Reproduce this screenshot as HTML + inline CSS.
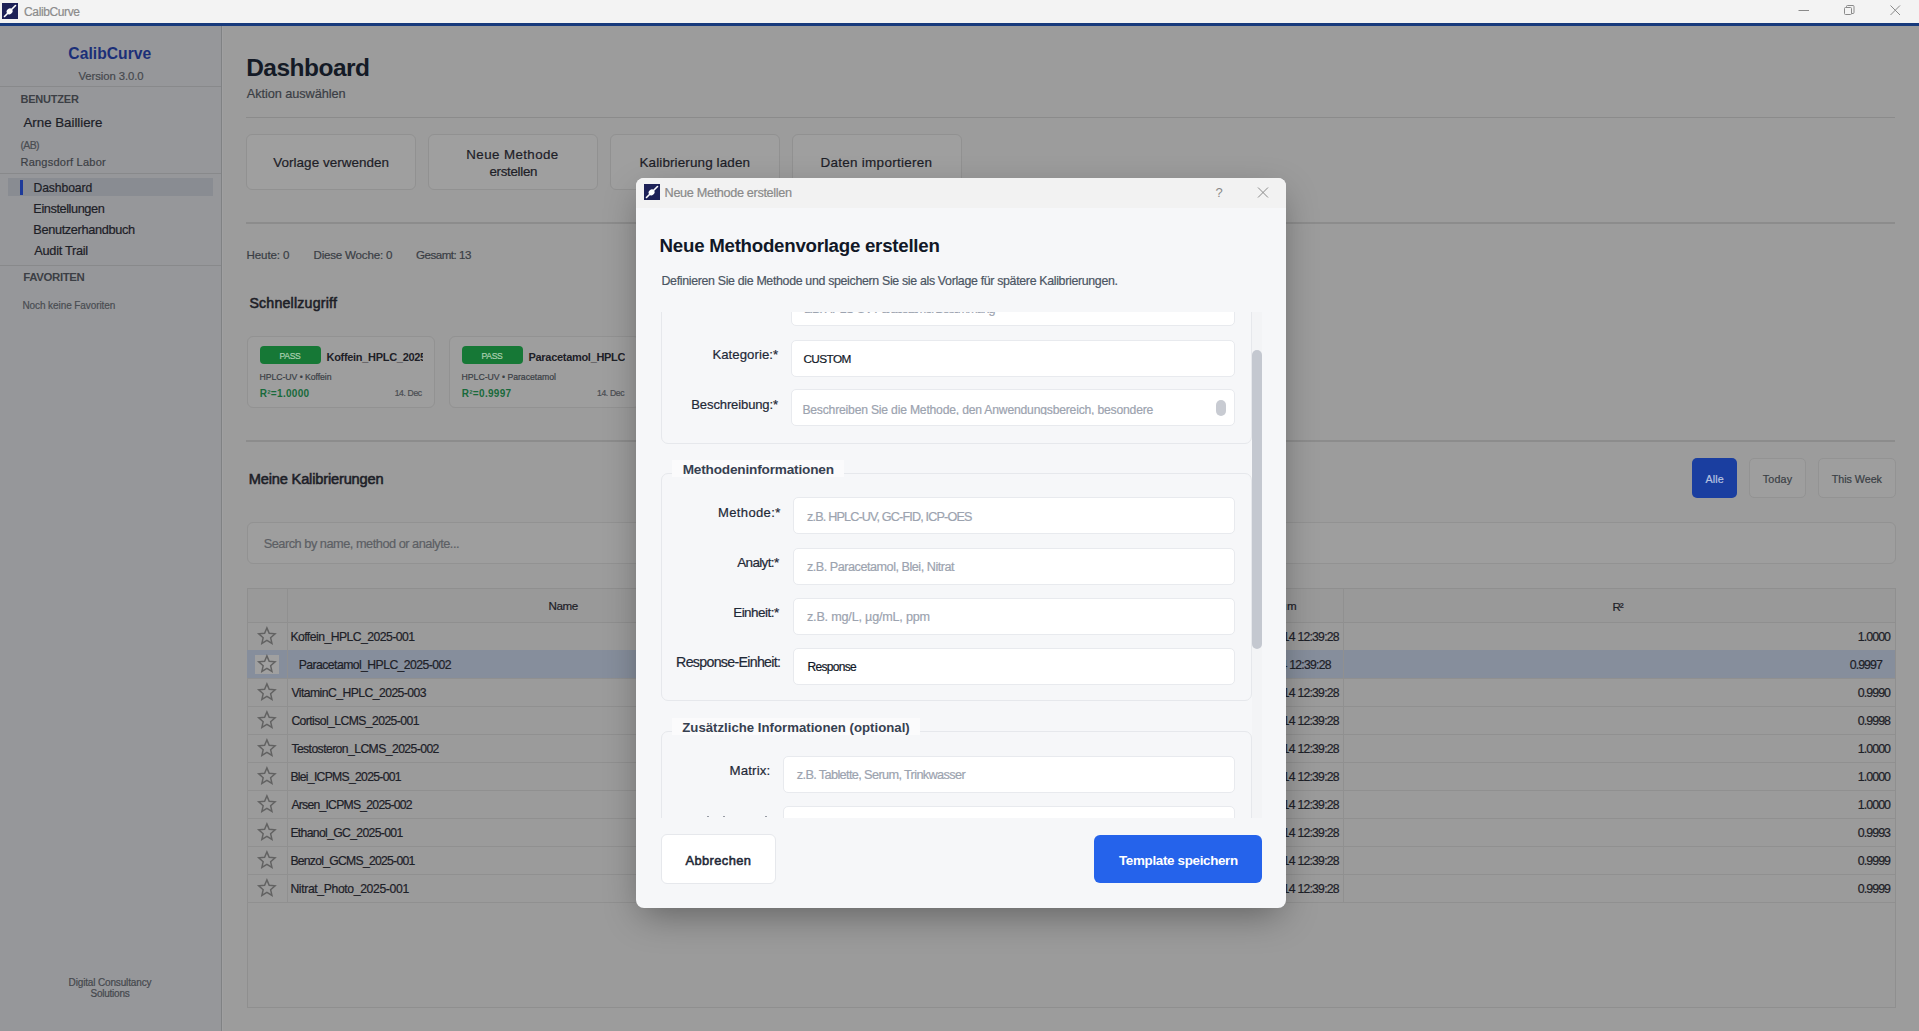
<!DOCTYPE html>
<html><head><meta charset="utf-8"><title>CalibCurve</title>
<style>
html,body{margin:0;padding:0;}
body{width:1919px;height:1031px;position:relative;overflow:hidden;background:#9c9c9c;font-family:"Liberation Sans",sans-serif;}
.b{position:absolute;}
.t{position:absolute;white-space:nowrap;line-height:1;font-family:"Liberation Sans",sans-serif;-webkit-text-stroke:0.2px currentColor;}
.t.bd{-webkit-text-stroke:0;}
.t.sb{-webkit-text-stroke:0.55px currentColor;}
</style></head><body>
<div class="b" style="left:0px;top:0px;width:1919px;height:23px;background:#f3f3f3;"></div>
<div class="b" style="left:0px;top:23px;width:1919px;height:3px;background:#173a7c;"></div>
<svg class="b" style="left:2px;top:3px" width="16" height="16" viewBox="0 0 16 16"><rect width="16" height="16" fill="#1d2157"/><line x1="2.5" y1="13.5" x2="13.5" y2="2.5" stroke="#fff" stroke-width="1.6" stroke-linecap="round"/><ellipse cx="7.6" cy="8.4" rx="3.1" ry="2.7" fill="#fff" transform="rotate(-40 7.6 8.4)"/></svg>
<svg class="b" style="left:1790px;top:0px" width="129" height="22"><line x1="8.5" y1="10.5" x2="19" y2="10.5" stroke="#8a8a8a" stroke-width="1"/>
<rect x="54.5" y="7.5" width="7" height="7" rx="1" fill="none" stroke="#8a8a8a" stroke-width="1"/><path d="M56.5 7.5 V6.5 a1 1 0 0 1 1 -1 H63 a1 1 0 0 1 1 1 V12.5 a1 1 0 0 1 -1 1 H61.5" fill="none" stroke="#8a8a8a" stroke-width="1"/>
<line x1="100.5" y1="5.5" x2="110" y2="15" stroke="#8a8a8a" stroke-width="1"/><line x1="110" y1="5.5" x2="100.5" y2="15" stroke="#8a8a8a" stroke-width="1"/></svg>
<div class="b" style="left:0px;top:26px;width:221px;height:1005px;background:#96979a;"></div>
<div class="b" style="left:221px;top:26px;width:1px;height:1005px;background:#808284;"></div>
<div class="b" style="left:222px;top:26px;width:1px;height:1005px;background:#a0a0a1;"></div>
<div class="b" style="left:0px;top:86.2px;width:221px;height:1.2px;background:#88898b;"></div>
<div class="b" style="left:0px;top:173px;width:221px;height:1.2px;background:#88898b;"></div>
<div class="b" style="left:0px;top:264.5px;width:221px;height:1.2px;background:#88898b;"></div>
<div class="b" style="left:8px;top:178px;width:205px;height:18px;background:#898c92;"></div>
<div class="b" style="left:20px;top:180px;width:3px;height:15px;background:#1d3a9a;"></div>
<div class="b" style="left:246px;top:117px;width:1649px;height:1.3px;background:#8b8b8b;"></div>
<div class="b" style="left:246px;top:134px;width:169.5px;height:55.5px;background:#9f9f9f;border:1px solid #919191;box-sizing:border-box;border-radius:6px;"></div>
<div class="b" style="left:428px;top:134px;width:169.5px;height:55.5px;background:#9f9f9f;border:1px solid #919191;box-sizing:border-box;border-radius:6px;"></div>
<div class="b" style="left:610px;top:134px;width:169.5px;height:55.5px;background:#9f9f9f;border:1px solid #919191;box-sizing:border-box;border-radius:6px;"></div>
<div class="b" style="left:792px;top:134px;width:169.5px;height:55.5px;background:#9f9f9f;border:1px solid #919191;box-sizing:border-box;border-radius:6px;"></div>
<div class="b" style="left:246px;top:222.2px;width:1649px;height:1.6px;background:#8c8c8c;"></div>
<div class="b" style="left:246.5px;top:336px;width:188.5px;height:71.5px;background:#9e9e9e;border:1px solid #929292;box-sizing:border-box;border-radius:6px;"></div>
<div class="b" style="left:449px;top:336px;width:191px;height:71.5px;background:#9e9e9e;border:1px solid #929292;box-sizing:border-box;border-radius:6px;"></div>
<div class="b" style="left:259.8px;top:345.6px;width:60.9px;height:18.4px;background:#167836;border-radius:4px;"></div>
<div class="b" style="left:461.9px;top:345.6px;width:60.9px;height:18.4px;background:#167836;border-radius:4px;"></div>
<div class="b" style="left:246px;top:440.2px;width:1649px;height:1.6px;background:#8c8c8c;"></div>
<div class="b" style="left:1692px;top:458px;width:45px;height:40px;background:#1a3ea0;border-radius:5px;"></div>
<div class="b" style="left:1749px;top:458px;width:57px;height:40px;background:#9e9e9e;border:1px solid #939393;box-sizing:border-box;border-radius:5px;"></div>
<div class="b" style="left:1818px;top:458px;width:78px;height:40px;background:#9e9e9e;border:1px solid #939393;box-sizing:border-box;border-radius:5px;"></div>
<div class="b" style="left:246.5px;top:522px;width:1649.0px;height:41.5px;background:#9e9e9e;border:1px solid #929292;box-sizing:border-box;border-radius:6px;"></div>
<div class="b" style="left:246.5px;top:588px;width:1649.0px;height:420px;background:#9b9b9b;border:1px solid #8f8f8f;box-sizing:border-box;"></div>
<div class="b" style="left:247.5px;top:589px;width:1647.0px;height:33px;background:#999999;"></div>
<div class="b" style="left:247px;top:622px;width:1648px;height:1px;background:#8f8f8f;"></div>
<div class="b" style="left:247px;top:650px;width:1648px;height:1px;background:#909090;"></div>
<div class="b" style="left:247px;top:678px;width:1648px;height:1px;background:#909090;"></div>
<div class="b" style="left:247px;top:706px;width:1648px;height:1px;background:#909090;"></div>
<div class="b" style="left:247px;top:734px;width:1648px;height:1px;background:#909090;"></div>
<div class="b" style="left:247px;top:762px;width:1648px;height:1px;background:#909090;"></div>
<div class="b" style="left:247px;top:790px;width:1648px;height:1px;background:#909090;"></div>
<div class="b" style="left:247px;top:818px;width:1648px;height:1px;background:#909090;"></div>
<div class="b" style="left:247px;top:846px;width:1648px;height:1px;background:#909090;"></div>
<div class="b" style="left:247px;top:874px;width:1648px;height:1px;background:#909090;"></div>
<div class="b" style="left:247px;top:902px;width:1648px;height:1px;background:#909090;"></div>
<div class="b" style="left:247px;top:650px;width:1648px;height:28px;background:#868e9c;"></div>
<div class="b" style="left:287px;top:589px;width:1px;height:313px;background:#909090;"></div>
<div class="b" style="left:1343px;top:589px;width:1px;height:313px;background:#909090;"></div>
<div class="b" style="left:1214px;top:589px;width:1px;height:313px;background:#909090;"></div>
<div class="b" style="left:255px;top:655px;width:24px;height:19px;background:#a0a0a0;"></div>
<svg class="b" style="left:0;top:0" width="1919" height="1031"><path d="M266.90,627.90 L269.19,633.34 L275.08,633.84 L270.61,637.71 L271.95,643.46 L266.90,640.40 L261.85,643.46 L263.19,637.71 L258.72,633.84 L264.61,633.34 Z" fill="none" stroke="#626262" stroke-width="1.45" stroke-linejoin="miter"/><path d="M266.90,655.90 L269.19,661.34 L275.08,661.84 L270.61,665.71 L271.95,671.46 L266.90,668.40 L261.85,671.46 L263.19,665.71 L258.72,661.84 L264.61,661.34 Z" fill="none" stroke="#626262" stroke-width="1.45" stroke-linejoin="miter"/><path d="M266.90,683.90 L269.19,689.34 L275.08,689.84 L270.61,693.71 L271.95,699.46 L266.90,696.40 L261.85,699.46 L263.19,693.71 L258.72,689.84 L264.61,689.34 Z" fill="none" stroke="#626262" stroke-width="1.45" stroke-linejoin="miter"/><path d="M266.90,711.90 L269.19,717.34 L275.08,717.84 L270.61,721.71 L271.95,727.46 L266.90,724.40 L261.85,727.46 L263.19,721.71 L258.72,717.84 L264.61,717.34 Z" fill="none" stroke="#626262" stroke-width="1.45" stroke-linejoin="miter"/><path d="M266.90,739.90 L269.19,745.34 L275.08,745.84 L270.61,749.71 L271.95,755.46 L266.90,752.40 L261.85,755.46 L263.19,749.71 L258.72,745.84 L264.61,745.34 Z" fill="none" stroke="#626262" stroke-width="1.45" stroke-linejoin="miter"/><path d="M266.90,767.90 L269.19,773.34 L275.08,773.84 L270.61,777.71 L271.95,783.46 L266.90,780.40 L261.85,783.46 L263.19,777.71 L258.72,773.84 L264.61,773.34 Z" fill="none" stroke="#626262" stroke-width="1.45" stroke-linejoin="miter"/><path d="M266.90,795.90 L269.19,801.34 L275.08,801.84 L270.61,805.71 L271.95,811.46 L266.90,808.40 L261.85,811.46 L263.19,805.71 L258.72,801.84 L264.61,801.34 Z" fill="none" stroke="#626262" stroke-width="1.45" stroke-linejoin="miter"/><path d="M266.90,823.90 L269.19,829.34 L275.08,829.84 L270.61,833.71 L271.95,839.46 L266.90,836.40 L261.85,839.46 L263.19,833.71 L258.72,829.84 L264.61,829.34 Z" fill="none" stroke="#626262" stroke-width="1.45" stroke-linejoin="miter"/><path d="M266.90,851.90 L269.19,857.34 L275.08,857.84 L270.61,861.71 L271.95,867.46 L266.90,864.40 L261.85,867.46 L263.19,861.71 L258.72,857.84 L264.61,857.34 Z" fill="none" stroke="#626262" stroke-width="1.45" stroke-linejoin="miter"/><path d="M266.90,879.90 L269.19,885.34 L275.08,885.84 L270.61,889.71 L271.95,895.46 L266.90,892.40 L261.85,895.46 L263.19,889.71 L258.72,885.84 L264.61,885.34 Z" fill="none" stroke="#626262" stroke-width="1.45" stroke-linejoin="miter"/></svg>
<div class="t" style="left:24.1px;top:5.7px;font-size:12px;font-weight:400;color:#8b8b8b;letter-spacing:-0.387px;">CalibCurve</div>
<div class="t bd" style="left:68.3px;top:46.4px;font-size:15.65px;font-weight:700;color:#1b2f78;letter-spacing:0.047px;">CalibCurve</div>
<div class="t" style="left:78.5px;top:71.09px;font-size:11.3px;font-weight:400;color:#45484d;letter-spacing:-0.08px;">Version 3.0.0</div>
<div class="t bd" style="left:20.5px;top:93.65px;font-size:11px;font-weight:700;color:#3c3f45;letter-spacing:-0.206px;">BENUTZER</div>
<div class="t" style="left:23.5px;top:115.67px;font-size:13.33px;font-weight:500;color:#1d2027;letter-spacing:-0.027px;">Arne Bailliere</div>
<div class="t" style="left:20.5px;top:140.07px;font-size:10.5px;font-weight:400;color:#4a4d52;letter-spacing:-0.668px;">(AB)</div>
<div class="t" style="left:20.5px;top:156.95px;font-size:11px;font-weight:400;color:#3c3f45;letter-spacing:0.23px;">Rangsdorf Labor</div>
<div class="t" style="left:33.5px;top:182.46px;font-size:12.17px;font-weight:400;color:#1d2027;letter-spacing:-0.101px;">Dashboard</div>
<div class="t" style="left:33.3px;top:203.46px;font-size:12.75px;font-weight:400;color:#1d2027;letter-spacing:-0.422px;">Einstellungen</div>
<div class="t" style="left:33.3px;top:224.26px;font-size:12.75px;font-weight:400;color:#1d2027;letter-spacing:-0.357px;">Benutzerhandbuch</div>
<div class="t" style="left:34.3px;top:245.06px;font-size:12.75px;font-weight:400;color:#1d2027;letter-spacing:-0.279px;">Audit Trail</div>
<div class="t bd" style="left:23.3px;top:272.37px;font-size:11.45px;font-weight:700;color:#3c3f45;letter-spacing:-0.393px;">FAVORITEN</div>
<div class="t" style="left:22.4px;top:300.6px;font-size:10.0px;font-weight:400;color:#4a4d52;letter-spacing:-0.081px;">Noch keine Favoriten</div>
<div class="t" style="left:68.6px;top:978.3px;font-size:10.0px;font-weight:400;color:#45484d;letter-spacing:-0.15px;">Digital Consultancy</div>
<div class="t" style="left:90.6px;top:989.0px;font-size:10.0px;font-weight:400;color:#45484d;letter-spacing:-0.255px;">Solutions</div>
<div class="t bd" style="left:246.2px;top:56.17px;font-size:24.5px;font-weight:700;color:#141a26;letter-spacing:-0.525px;">Dashboard</div>
<div class="t" style="left:246.7px;top:87.96px;font-size:12.75px;font-weight:400;color:#3a3e45;letter-spacing:-0.063px;">Aktion auswählen</div>
<div class="t" style="left:273.3px;top:155.54px;font-size:13.48px;font-weight:500;color:#1d2027;letter-spacing:0.024px;">Vorlage verwenden</div>
<div class="t" style="left:466.3px;top:147.67px;font-size:13.33px;font-weight:500;color:#1d2027;letter-spacing:0.407px;">Neue Methode</div>
<div class="t" style="left:489.5px;top:164.67px;font-size:13.33px;font-weight:500;color:#1d2027;letter-spacing:-0.308px;">erstellen</div>
<div class="t" style="left:639.5px;top:155.54px;font-size:13.48px;font-weight:500;color:#1d2027;letter-spacing:0.113px;">Kalibrierung laden</div>
<div class="t" style="left:820.5px;top:155.54px;font-size:13.48px;font-weight:500;color:#1d2027;letter-spacing:0.277px;">Daten importieren</div>
<div class="t" style="left:246.5px;top:250.15px;font-size:11.59px;font-weight:400;color:#3a3e45;letter-spacing:-0.118px;">Heute: 0</div>
<div class="t" style="left:313.5px;top:250.15px;font-size:11.59px;font-weight:400;color:#3a3e45;letter-spacing:-0.206px;">Diese Woche: 0</div>
<div class="t" style="left:416px;top:250.15px;font-size:11.59px;font-weight:400;color:#3a3e45;letter-spacing:-0.49px;">Gesamt: 13</div>
<div class="t sb" style="left:249.4px;top:295.73px;font-size:14.2px;font-weight:400;color:#1d2027;letter-spacing:0.195px;">Schnellzugriff</div>
<div class="t" style="left:279.6px;top:351.59px;font-size:8.6px;font-weight:400;color:#a9cfae;letter-spacing:-0.386px;">PASS</div>
<div class="b" style="left:0;top:0;width:423px;height:1031px;overflow:hidden"><div class="t bd" style="left:326.5px;top:352.35px;font-size:11.0px;font-weight:700;color:#1d2027;letter-spacing:-0.3px;">Koffein_HPLC_2025-001</div></div>
<div class="t" style="left:259.6px;top:373.41px;font-size:8.7px;font-weight:400;color:#3a3e45;letter-spacing:-0.06px;">HPLC-UV • Koffein</div>
<div class="t bd" style="left:259.7px;top:389.3px;font-size:10.0px;font-weight:700;color:#186a3b;letter-spacing:0.31px;">R²=1.0000</div>
<div class="t" style="left:394.7px;top:389.19px;font-size:8.6px;font-weight:400;color:#4a4d52;letter-spacing:-0.37px;">14. Dec</div>
<div class="t" style="left:481.6px;top:351.59px;font-size:8.6px;font-weight:400;color:#a9cfae;letter-spacing:-0.386px;">PASS</div>
<div class="b" style="left:0;top:0;width:625px;height:1031px;overflow:hidden"><div class="t bd" style="left:528.5px;top:352.35px;font-size:11.0px;font-weight:700;color:#1d2027;letter-spacing:-0.3px;">Paracetamol_HPLC_2025-002</div></div>
<div class="t" style="left:461.6px;top:373.41px;font-size:8.7px;font-weight:400;color:#3a3e45;letter-spacing:-0.022px;">HPLC-UV • Paracetamol</div>
<div class="t bd" style="left:461.7px;top:389.3px;font-size:10.0px;font-weight:700;color:#186a3b;letter-spacing:0.31px;">R²=0.9997</div>
<div class="t" style="left:597px;top:389.19px;font-size:8.6px;font-weight:400;color:#4a4d52;letter-spacing:-0.353px;">14. Dec</div>
<div class="t sb" style="left:248.7px;top:471.86px;font-size:14.64px;font-weight:400;color:#1d2027;letter-spacing:-0.172px;">Meine Kalibrierungen</div>
<div class="t" style="left:1705.4px;top:474.49px;font-size:10.72px;font-weight:400;color:#b7c3e0;letter-spacing:0.163px;">Alle</div>
<div class="t" style="left:1762.7px;top:474.49px;font-size:10.72px;font-weight:400;color:#3a3e45;letter-spacing:0.189px;">Today</div>
<div class="t" style="left:1831.7px;top:474.49px;font-size:10.72px;font-weight:400;color:#3a3e45;letter-spacing:-0.022px;">This Week</div>
<div class="t" style="left:263.7px;top:538.16px;font-size:12.75px;font-weight:400;color:#5c5f64;letter-spacing:-0.479px;">Search by name, method or analyte...</div>
<div class="t" style="left:548.5px;top:600.44px;font-size:11.6px;font-weight:400;color:#1d2027;letter-spacing:-0.393px;">Name</div>
<div class="t" style="left:1261px;top:600.44px;font-size:11.6px;font-weight:400;color:#1d2027;letter-spacing:0.378px;">Datum</div>
<div class="t" style="left:1612.6px;top:601.44px;font-size:11.6px;font-weight:400;color:#1d2027;letter-spacing:-1.173px;">R²</div>
<div class="t" style="left:290.4px;top:630.73px;font-size:12.2px;font-weight:400;color:#1d2027;letter-spacing:-0.531px;">Koffein_HPLC_2025-001</div>
<div class="t" style="left:1239.91px;top:630.73px;font-size:12.2px;font-weight:400;color:#1d2027;letter-spacing:-0.75px;">2025-12-14 12:39:28</div>
<div class="t" style="left:1857.84px;top:631.36px;font-size:12.4px;font-weight:400;color:#1d2027;letter-spacing:-0.95px;">1.0000</div>
<div class="t" style="left:298.8px;top:658.73px;font-size:12.2px;font-weight:400;color:#1d2027;letter-spacing:-0.555px;">Paracetamol_HPLC_2025-002</div>
<div class="t" style="left:1231.81px;top:658.73px;font-size:12.2px;font-weight:400;color:#1d2027;letter-spacing:-0.75px;">2025-12-14 12:39:28</div>
<div class="t" style="left:1849.74px;top:659.36px;font-size:12.4px;font-weight:400;color:#1d2027;letter-spacing:-0.95px;">0.9997</div>
<div class="t" style="left:291.4px;top:686.73px;font-size:12.2px;font-weight:400;color:#1d2027;letter-spacing:-0.553px;">VitaminC_HPLC_2025-003</div>
<div class="t" style="left:1239.91px;top:686.73px;font-size:12.2px;font-weight:400;color:#1d2027;letter-spacing:-0.75px;">2025-12-14 12:39:28</div>
<div class="t" style="left:1857.84px;top:687.36px;font-size:12.4px;font-weight:400;color:#1d2027;letter-spacing:-0.95px;">0.9990</div>
<div class="t" style="left:291.4px;top:714.73px;font-size:12.2px;font-weight:400;color:#1d2027;letter-spacing:-0.579px;">Cortisol_LCMS_2025-001</div>
<div class="t" style="left:1239.91px;top:714.73px;font-size:12.2px;font-weight:400;color:#1d2027;letter-spacing:-0.75px;">2025-12-14 12:39:28</div>
<div class="t" style="left:1857.84px;top:715.36px;font-size:12.4px;font-weight:400;color:#1d2027;letter-spacing:-0.95px;">0.9998</div>
<div class="t" style="left:291.4px;top:742.73px;font-size:12.2px;font-weight:400;color:#1d2027;letter-spacing:-0.581px;">Testosteron_LCMS_2025-002</div>
<div class="t" style="left:1239.91px;top:742.73px;font-size:12.2px;font-weight:400;color:#1d2027;letter-spacing:-0.75px;">2025-12-14 12:39:28</div>
<div class="t" style="left:1857.84px;top:743.36px;font-size:12.4px;font-weight:400;color:#1d2027;letter-spacing:-0.95px;">1.0000</div>
<div class="t" style="left:290.4px;top:770.73px;font-size:12.2px;font-weight:400;color:#1d2027;letter-spacing:-0.711px;">Blei_ICPMS_2025-001</div>
<div class="t" style="left:1239.91px;top:770.73px;font-size:12.2px;font-weight:400;color:#1d2027;letter-spacing:-0.75px;">2025-12-14 12:39:28</div>
<div class="t" style="left:1857.84px;top:771.36px;font-size:12.4px;font-weight:400;color:#1d2027;letter-spacing:-0.95px;">1.0000</div>
<div class="t" style="left:291.4px;top:798.73px;font-size:12.2px;font-weight:400;color:#1d2027;letter-spacing:-0.754px;">Arsen_ICPMS_2025-002</div>
<div class="t" style="left:1239.91px;top:798.73px;font-size:12.2px;font-weight:400;color:#1d2027;letter-spacing:-0.75px;">2025-12-14 12:39:28</div>
<div class="t" style="left:1857.84px;top:799.36px;font-size:12.4px;font-weight:400;color:#1d2027;letter-spacing:-0.95px;">1.0000</div>
<div class="t" style="left:290.4px;top:826.73px;font-size:12.2px;font-weight:400;color:#1d2027;letter-spacing:-0.656px;">Ethanol_GC_2025-001</div>
<div class="t" style="left:1239.91px;top:826.73px;font-size:12.2px;font-weight:400;color:#1d2027;letter-spacing:-0.75px;">2025-12-14 12:39:28</div>
<div class="t" style="left:1857.84px;top:827.36px;font-size:12.4px;font-weight:400;color:#1d2027;letter-spacing:-0.95px;">0.9993</div>
<div class="t" style="left:290.4px;top:854.73px;font-size:12.2px;font-weight:400;color:#1d2027;letter-spacing:-0.737px;">Benzol_GCMS_2025-001</div>
<div class="t" style="left:1239.91px;top:854.73px;font-size:12.2px;font-weight:400;color:#1d2027;letter-spacing:-0.75px;">2025-12-14 12:39:28</div>
<div class="t" style="left:1857.84px;top:855.36px;font-size:12.4px;font-weight:400;color:#1d2027;letter-spacing:-0.95px;">0.9999</div>
<div class="t" style="left:290.4px;top:882.73px;font-size:12.2px;font-weight:400;color:#1d2027;letter-spacing:-0.363px;">Nitrat_Photo_2025-001</div>
<div class="t" style="left:1239.91px;top:882.73px;font-size:12.2px;font-weight:400;color:#1d2027;letter-spacing:-0.75px;">2025-12-14 12:39:28</div>
<div class="t" style="left:1857.84px;top:883.36px;font-size:12.4px;font-weight:400;color:#1d2027;letter-spacing:-0.95px;">0.9999</div>
<div class="b" style="left:636px;top:178px;width:650px;height:730px;background:#f6f7f9;border-radius:8px;box-shadow:0 12px 36px -6px rgba(0,0,0,0.38);"></div>
<div class="b" style="left:636px;top:178px;width:650px;height:30px;background:#f2f2f2;border-radius:8px 8px 0 0;"></div>
<svg class="b" style="left:644px;top:184px" width="16" height="16" viewBox="0 0 16 16"><rect width="16" height="16" fill="#1d2157"/><line x1="2.5" y1="13.5" x2="13.5" y2="2.5" stroke="#fff" stroke-width="1.6" stroke-linecap="round"/><ellipse cx="7.6" cy="8.4" rx="3.1" ry="2.7" fill="#fff" transform="rotate(-40 7.6 8.4)"/></svg>
<svg class="b" style="left:1200px;top:180px" width="80" height="26"><text x="15.5" y="17" font-family="Liberation Sans" font-size="13" fill="#8a8a8a">?</text>
<line x1="58" y1="7.5" x2="68" y2="17.5" stroke="#8a8a8a" stroke-width="1"/><line x1="68" y1="7.5" x2="58" y2="17.5" stroke="#8a8a8a" stroke-width="1"/></svg>
<div class="b" style="left:636px;top:312px;width:650px;height:505.5px;overflow:hidden">
<div class="b" style="left:24.5px;top:-62px;width:591.0px;height:194px;background:#f6f7f9;border:1px solid #e6e8ec;box-sizing:border-box;border-radius:7px;"></div>
<div class="b" style="left:154.7px;top:-32px;width:444.1px;height:46.3px;background:#ffffff;border:1px solid #e8eaee;box-sizing:border-box;border-radius:5px;"></div>
<div class="b" style="left:154.7px;top:27.5px;width:444.1px;height:37.3px;background:#ffffff;border:1px solid #e8eaee;box-sizing:border-box;border-radius:5px;"></div>
<div class="b" style="left:154.7px;top:77.4px;width:444.1px;height:37.0px;background:#ffffff;border:1px solid #e8eaee;box-sizing:border-box;border-radius:5px;"></div>
<div class="b" style="left:580px;top:87.8px;width:10px;height:16.2px;background:#c8cbd2;border-radius:5px;"></div>
<div class="b" style="left:24.5px;top:160.6px;width:591.0px;height:228.4px;background:#f6f7f9;border:1px solid #e6e8ec;box-sizing:border-box;border-radius:7px;"></div>
<div class="b" style="left:35.7px;top:148.2px;width:172.5px;height:16.8px;background:#fbfbfc;"></div>
<div class="b" style="left:157px;top:185.3px;width:441.8px;height:37.0px;background:#ffffff;border:1px solid #e8eaee;box-sizing:border-box;border-radius:5px;"></div>
<div class="b" style="left:157px;top:235.5px;width:441.8px;height:37.0px;background:#ffffff;border:1px solid #e8eaee;box-sizing:border-box;border-radius:5px;"></div>
<div class="b" style="left:157px;top:285.5px;width:441.8px;height:37.0px;background:#ffffff;border:1px solid #e8eaee;box-sizing:border-box;border-radius:5px;"></div>
<div class="b" style="left:157px;top:335.5px;width:441.8px;height:37.0px;background:#ffffff;border:1px solid #e8eaee;box-sizing:border-box;border-radius:5px;"></div>
<div class="b" style="left:24.5px;top:418.6px;width:591.0px;height:169.4px;background:#f6f7f9;border:1px solid #e6e8ec;box-sizing:border-box;border-radius:7px;"></div>
<div class="b" style="left:36px;top:406.3px;width:247.5px;height:16.7px;background:#fbfbfc;"></div>
<div class="b" style="left:146.7px;top:443.7px;width:452.1px;height:37.0px;background:#ffffff;border:1px solid #e8eaee;box-sizing:border-box;border-radius:5px;"></div>
<div class="b" style="left:146.7px;top:493.5px;width:452.1px;height:37.0px;background:#ffffff;border:1px solid #e8eaee;box-sizing:border-box;border-radius:5px;"></div>
<div class="b" style="left:616px;top:0px;width:10px;height:506px;background:#f3f4f6;"></div>
<div class="b" style="left:616px;top:37.7px;width:10px;height:299.3px;background:#c4c8d0;border-radius:5px;"></div>
<div class="b" style="left:71px;top:503.6px;width:2px;height:1.9px;background:#8a8f98;border-radius:1px;"></div>
<div class="b" style="left:86.5px;top:503.6px;width:2.0px;height:1.9px;background:#8a8f98;border-radius:1px;"></div>
<div class="b" style="left:128.5px;top:503.6px;width:2.0px;height:1.9px;background:#8a8f98;border-radius:1px;"></div>
</div>
<div class="b" style="left:660.5px;top:834.4px;width:115.0px;height:49.2px;background:#ffffff;border:1px solid #e6e8ec;box-sizing:border-box;border-radius:6px;"></div>
<div class="b" style="left:1094px;top:835px;width:168px;height:48px;background:#2563eb;border-radius:6px;"></div>
<div class="t" style="left:664.6px;top:186.72px;font-size:12.68px;font-weight:400;color:#8a8a8a;letter-spacing:-0.338px;">Neue Methode erstellen</div>
<div class="t bd" style="left:659.6px;top:237.41px;font-size:18.7px;font-weight:700;color:#111827;letter-spacing:-0.257px;">Neue Methodenvorlage erstellen</div>
<div class="t" style="left:661.5px;top:275.27px;font-size:12.39px;font-weight:400;color:#4b5563;letter-spacing:-0.328px;">Definieren Sie die Methode und speichern Sie sie als Vorlage für spätere Kalibrierungen.</div>
<div class="b" style="left:0;top:312px;width:1919px;height:40px;overflow:hidden"><div class="t" style="left:804.4px;top:-8.91px;font-size:12.6px;font-weight:400;color:#9ca3af;letter-spacing:-1.093px;">z.B. HPLC-UV Paracetamol Bestimmung</div></div>
<div class="t" style="left:712.4px;top:347.89px;font-size:13.19px;font-weight:400;color:#1f2937;letter-spacing:0.048px;">Kategorie:*</div>
<div class="t" style="left:691.3px;top:397.92px;font-size:13.04px;font-weight:400;color:#1f2937;letter-spacing:-0.124px;">Beschreibung:*</div>
<div class="t" style="left:803.4px;top:353.97px;font-size:11.8px;font-weight:400;color:#111827;letter-spacing:-0.595px;">CUSTOM</div>
<div class="b" style="left:0;top:0;width:1919px;height:415px;overflow:hidden"><div class="t" style="left:802.4px;top:403.66px;font-size:12.17px;font-weight:400;color:#9ca3af;letter-spacing:-0.2px;">Beschreiben Sie die Methode, den Anwendungsbereich, besondere</div></div>
<div class="t bd" style="left:682.7px;top:463.42px;font-size:13.62px;font-weight:700;color:#374151;letter-spacing:-0.184px;">Methodeninformationen</div>
<div class="t" style="left:718px;top:506.12px;font-size:13.04px;font-weight:400;color:#1f2937;letter-spacing:0.358px;">Methode:*</div>
<div class="t" style="left:807.1px;top:510.58px;font-size:12.61px;font-weight:400;color:#9ca3af;letter-spacing:-0.835px;">z.B. HPLC-UV, GC-FID, ICP-OES</div>
<div class="t" style="left:737.2px;top:555.64px;font-size:13.48px;font-weight:400;color:#1f2937;letter-spacing:-0.639px;">Analyt:*</div>
<div class="t" style="left:807px;top:561.48px;font-size:12.61px;font-weight:400;color:#9ca3af;letter-spacing:-0.471px;">z.B. Paracetamol, Blei, Nitrat</div>
<div class="t" style="left:733.2px;top:605.74px;font-size:13.48px;font-weight:400;color:#1f2937;letter-spacing:-0.528px;">Einheit:*</div>
<div class="t" style="left:807px;top:611.48px;font-size:12.61px;font-weight:400;color:#9ca3af;letter-spacing:-0.2px;">z.B. mg/L, µg/mL, ppm</div>
<div class="t" style="left:676.1px;top:655.23px;font-size:14.2px;font-weight:400;color:#1f2937;letter-spacing:-0.693px;">Response-Einheit:</div>
<div class="t" style="left:807.6px;top:660.8px;font-size:12px;font-weight:400;color:#111827;letter-spacing:-0.694px;">Response</div>
<div class="t bd" style="left:682.3px;top:721.39px;font-size:13.19px;font-weight:700;color:#374151;letter-spacing:0.008px;">Zusätzliche Informationen (optional)</div>
<div class="t" style="left:729.5px;top:763.6px;font-size:13.3px;font-weight:400;color:#1f2937;letter-spacing:0.151px;">Matrix:</div>
<div class="t" style="left:796.8px;top:768.96px;font-size:12.75px;font-weight:400;color:#9ca3af;letter-spacing:-0.649px;">z.B. Tablette, Serum, Trinkwasser</div>
<div class="t sb" style="left:685.6px;top:854.93px;font-size:12.9px;font-weight:400;color:#1f2937;letter-spacing:0.365px;">Abbrechen</div>
<div class="t bd" style="left:1119px;top:854.31px;font-size:13.4px;font-weight:700;color:#ffffff;letter-spacing:-0.329px;">Template speichern</div>
</body></html>
